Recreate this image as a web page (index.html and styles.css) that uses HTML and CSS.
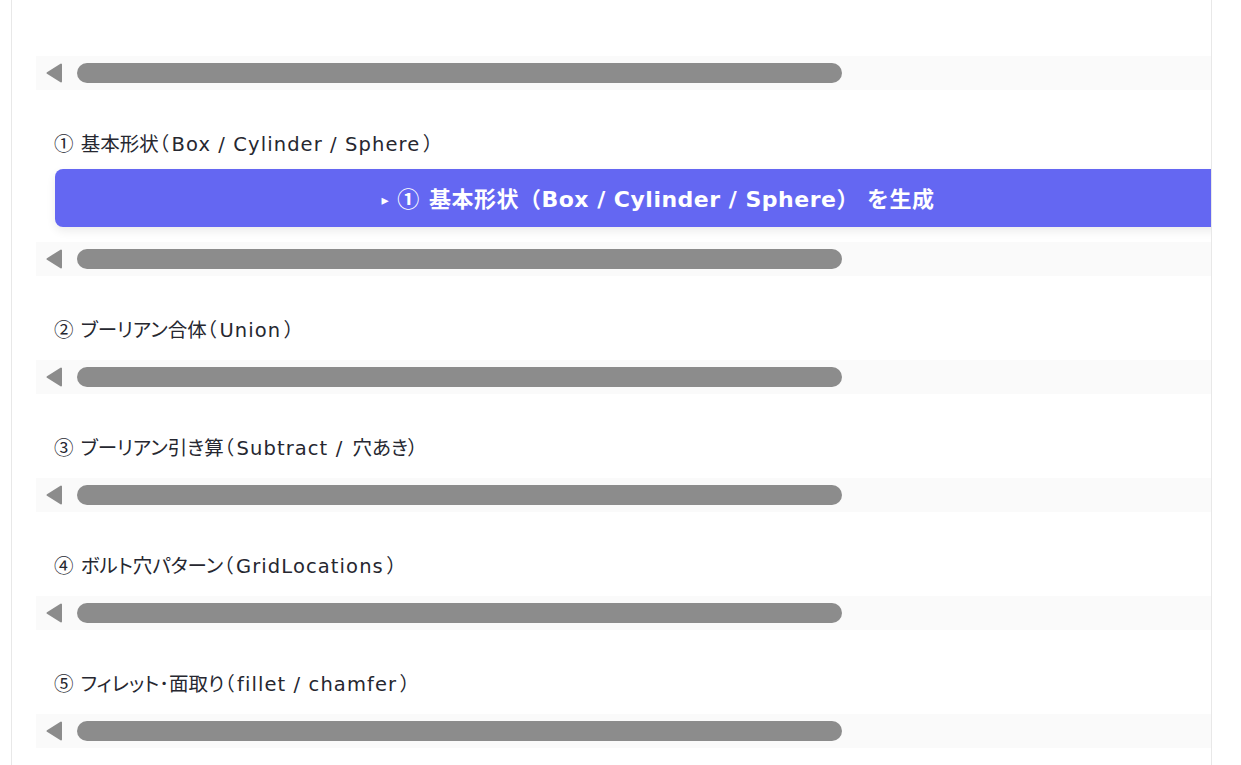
FILE: index.html
```html
<!DOCTYPE html>
<html lang="ja">
<head>
<meta charset="utf-8">
<link rel="stylesheet" href="styles.css">
</head>
<body>
<div class="frame">
  <div class="col">
    <div class="strip first"><svg class="arrow" viewBox="0 0 16 20"><path d="M15 1.5 L15 18.5 L1.5 10 Z" fill="#8c8c8c" stroke="#8c8c8c" stroke-width="2" stroke-linejoin="round"/></svg><div class="thumb"></div></div>

    <div class="label tight"><span class="num">①</span> 基本形状（<span class="en">Box / Cylinder / Sphere</span>）</div>
    <button class="run"><span class="tri">▸</span> <span class="num">①</span> 基本形状（Box / Cylinder / Sphere） を生成</button>
    <div class="strip after-btn"><svg class="arrow" viewBox="0 0 16 20"><path d="M15 1.5 L15 18.5 L1.5 10 Z" fill="#8c8c8c" stroke="#8c8c8c" stroke-width="2" stroke-linejoin="round"/></svg><div class="thumb"></div></div>

    <div class="label"><span class="num">②</span> ブーリアン合体（<span class="en">Union</span>）</div>
    <div class="strip"><svg class="arrow" viewBox="0 0 16 20"><path d="M15 1.5 L15 18.5 L1.5 10 Z" fill="#8c8c8c" stroke="#8c8c8c" stroke-width="2" stroke-linejoin="round"/></svg><div class="thumb"></div></div>

    <div class="label"><span class="num">③</span> ブーリアン引き算（<span class="en">Subtract /</span> 穴あき）</div>
    <div class="strip"><svg class="arrow" viewBox="0 0 16 20"><path d="M15 1.5 L15 18.5 L1.5 10 Z" fill="#8c8c8c" stroke="#8c8c8c" stroke-width="2" stroke-linejoin="round"/></svg><div class="thumb"></div></div>

    <div class="label"><span class="num">④</span> ボルト穴パターン（<span class="en">GridLocations</span>）</div>
    <div class="strip"><svg class="arrow" viewBox="0 0 16 20"><path d="M15 1.5 L15 18.5 L1.5 10 Z" fill="#8c8c8c" stroke="#8c8c8c" stroke-width="2" stroke-linejoin="round"/></svg><div class="thumb"></div></div>

    <div class="label"><span class="num">⑤</span> フィレット<span class="dot">･</span>面取り（<span class="en">fillet / chamfer</span>）</div>
    <div class="strip"><svg class="arrow" viewBox="0 0 16 20"><path d="M15 1.5 L15 18.5 L1.5 10 Z" fill="#8c8c8c" stroke="#8c8c8c" stroke-width="2" stroke-linejoin="round"/></svg><div class="thumb"></div></div>
  </div>
</div>
</body>
</html>
```
FILE: styles.css
```css
html, body {
  margin: 0;
  padding: 0;
  background: #ffffff;
}
.frame {
  margin-left: 11px;
  width: 1199px;
  height: 765px;
  border-left: 1px solid #e8e8e8;
  border-right: 1px solid #e8e8e8;
  overflow: hidden;
  font-family: "DejaVu Sans", "Noto Sans CJK JP", sans-serif;
}
.col {
  padding-left: 42px;
  padding-top: 56px;
  display: flex;
  flex-direction: column;
}
.strip {
  margin-left: -18px;
  width: 1300px;
  height: 34px;
  background: #fafafa;
  display: flex;
  align-items: center;
  flex-shrink: 0;
}
.arrow {
  width: 16px;
  height: 20px;
  margin-left: 10px;
  display: block;
}
.thumb {
  margin-left: 15px;
  width: 765px;
  height: 20px;
  border-radius: 10px;
  background: #8c8c8c;
}
.label {
  margin-top: 39px;
  height: 28px;
  line-height: 28px;
  font-size: 19.5px;
  font-feature-settings: "palt";
  color: #262730;
  margin-bottom: 17px;
  white-space: nowrap;
}
.label.tight {
  margin-bottom: 12px;
}
.en {
  letter-spacing: 1.1px;
  margin: 0 3px;
}
.num {
  font-family: "Noto Sans CJK JP", sans-serif;
  margin-right: 1px;
}
.dot {
  font-family: "Noto Sans CJK JP", sans-serif;
}
.run {
  width: 1206px;
  height: 58px;
  margin-left: 1px;
  border: none;
  border-radius: 8px;
  background: #6467f2;
  color: #ffffff;
  font-family: "DejaVu Sans", "Noto Sans CJK JP", sans-serif;
  font-weight: 700;
  font-size: 22px;
  letter-spacing: 0.5px;
  box-shadow: 0 4px 10px rgba(0, 0, 0, 0.08);
  flex-shrink: 0;
  white-space: nowrap;
  padding: 0 0 2px 0;
}
.tri {
  font-size: 0.65em;
  vertical-align: 2px;
}
.strip.after-btn {
  margin-top: 15px;
}
```
